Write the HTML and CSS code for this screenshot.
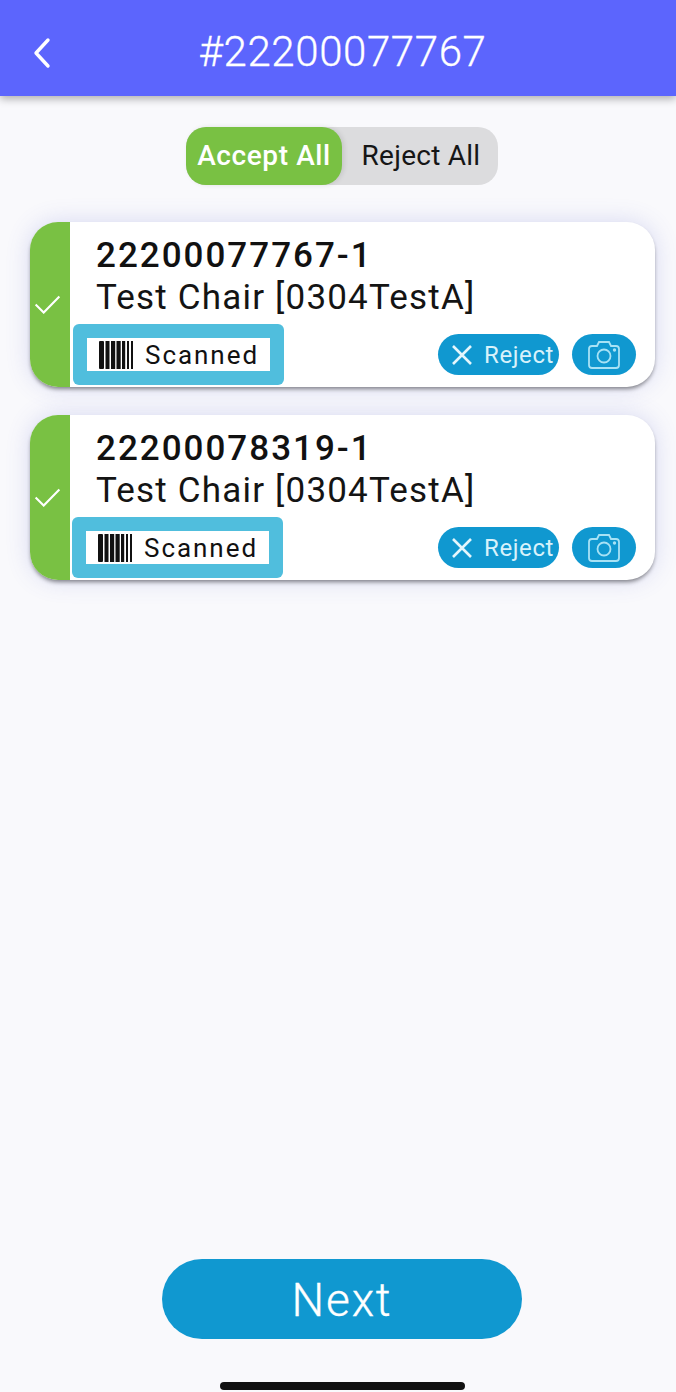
FILE: index.html
```html
<!DOCTYPE html>
<html lang="en">
<head>
<meta charset="utf-8">
<title>#22200077767</title>
<link rel="stylesheet" href="styles.css">
</head>
<body>
<div class="page">
  <header class="topbar">
    <svg class="back" viewBox="0 0 20 32" width="20" height="32"><path d="M16 3 L4 16 L16 29"/></svg>
    <h1 class="title">#22200077767</h1>
  </header>
  <div class="segment">
    <div class="seg-on">Accept All</div>
    <div class="seg-off">Reject All</div>
  </div>
  <main class="list">
    <section class="card">
      <div class="strip"><svg class="check" viewBox="0 0 28 20" width="27" height="19"><path d="M1.5 10 L10 18.5 L26.5 1.5"/></svg></div>
      <div class="body">
        <div class="code">22200077767-1</div>
        <div class="name">Test Chair [0304TestA]</div>
        <div class="row">
          <div class="badge"><div class="badge-in">
            <svg class="bars" viewBox="0 0 34 28" width="34" height="28"><path d="M0 1q0-1 1-1h3q1 0 1 1v26q0 1-1 1H1q-1 0-1-1zM6.500 0H10.500v28H6.500zM12 0h4.200v28H12zM17.500 0h4.200v28h-4.200zM23 0h3.200v28H23zM28 0h2v28h-2zM32 0h2.200v28H32z"/></svg>
            <span>Scanned</span>
          </div></div>
          <div class="actions">
            <button class="pill reject"><svg class="x" viewBox="0 0 22 22" width="22" height="22"><path d="M2 2 L20 20 M20 2 L2 20"/></svg>Reject</button>
            <button class="pill cam"><svg class="camera" viewBox="0 0 32 28" width="32" height="28"><path d="M4 5h5l2-4h10l2 4h5q3 0 3 3v16q0 3-3 3H4q-3 0-3-3V8q0-3 3-3z"/><circle cx="16" cy="15" r="6.500"/><circle cx="26.500" cy="9" r=".8"/></svg></button>
          </div>
        </div>
      </div>
    </section>
    <section class="card">
      <div class="strip"><svg class="check" viewBox="0 0 28 20" width="27" height="19"><path d="M1.5 10 L10 18.5 L26.5 1.5"/></svg></div>
      <div class="body">
        <div class="code">22200078319-1</div>
        <div class="name">Test Chair [0304TestA]</div>
        <div class="row">
          <div class="badge shift"><div class="badge-in">
            <svg class="bars" viewBox="0 0 34 28" width="34" height="28"><path d="M0 1q0-1 1-1h3q1 0 1 1v26q0 1-1 1H1q-1 0-1-1zM6.500 0H10.500v28H6.500zM12 0h4.200v28H12zM17.500 0h4.200v28h-4.200zM23 0h3.200v28H23zM28 0h2v28h-2zM32 0h2.200v28H32z"/></svg>
            <span>Scanned</span>
          </div></div>
          <div class="actions">
            <button class="pill reject"><svg class="x" viewBox="0 0 22 22" width="22" height="22"><path d="M2 2 L20 20 M20 2 L2 20"/></svg>Reject</button>
            <button class="pill cam"><svg class="camera" viewBox="0 0 32 28" width="32" height="28"><path d="M4 5h5l2-4h10l2 4h5q3 0 3 3v16q0 3-3 3H4q-3 0-3-3V8q0-3 3-3z"/><circle cx="16" cy="15" r="6.500"/><circle cx="26.500" cy="9" r=".8"/></svg></button>
          </div>
        </div>
      </div>
    </section>
  </main>
  <footer class="foot">
    <button class="next">Next</button>
    <div class="home"></div>
  </footer>
</div>
</body>
</html>
```
FILE: styles.css
```css
* { box-sizing: border-box; }
html, body { margin: 0; padding: 0; }
body { font-family: Roboto, "Liberation Sans", sans-serif; background: #f9f9fc; color: #111; }
.page { width: 676px; height: 1392px; display: flex; flex-direction: column; overflow: hidden; }
.topbar { height: 96px; flex: none; background: #5c65fd; box-shadow: 0 3px 8px rgba(0,0,0,.3); position: relative; display: flex; align-items: center; justify-content: center; padding-left: 9px; }
.back { position: absolute; left: 32px; top: 37px; fill: none; stroke: #fff; stroke-width: 3.4; stroke-linecap: round; stroke-linejoin: round; }
.title { margin: 0; font-size: 42px; font-weight: 300; color: #fff; line-height: 1; padding-top: 8px; letter-spacing: .6px; -webkit-text-stroke: .3px #fff; }
.segment { margin: 31px 0 0 186px; width: 312px; height: 58px; flex: none; border-radius: 20px; background: #dcdcde; display: flex; }
.seg-on { width: 156px; background: #79c143; color: #fff; border-radius: 20px; font-size: 28px; font-weight: 500; display: flex; align-items: center; justify-content: center; letter-spacing: .6px; padding-bottom: 2px; box-shadow: 2px 0 5px rgba(0,0,0,.1); }
.seg-off { flex: 1; font-size: 28px; display: flex; align-items: center; justify-content: center; letter-spacing: .25px; color: #161616; padding: 0 0 2px 2px; }
.list { margin: 37px 21px 0 30px; display: flex; flex-direction: column; gap: 28px; }
.card { height: 165px; border-radius: 28px; background: #fff; display: flex; box-shadow: 0 3px 4px -1px rgba(0,0,0,.45), 0 0 24px rgba(80,90,200,.2); }
.strip { width: 40px; flex: none; background: #79c143; border-radius: 28px 0 0 28px; display: flex; align-items: center; justify-content: center; }
.check { fill: none; stroke: #fff; stroke-width: 2.2; margin-right: 5px; }
.body { flex: 1; padding: 13px 19px 0 26px; display: flex; flex-direction: column; }
.code { font-size: 35px; font-weight: 500; line-height: 42px; letter-spacing: 2px; color: #111; }
.name { font-size: 35px; font-weight: 400; line-height: 42px; letter-spacing: 1.18px; color: #141414; }
.row { display: flex; justify-content: space-between; align-items: flex-start; margin-left: -23px; margin-top: 5px; }
.badge { width: 211px; height: 61px; background: #50bedd; border-radius: 6px; padding: 14px; }
.badge.shift { margin-left: -1px; }
.badge-in { background: #fff; height: 33px; display: flex; align-items: center; padding-left: 12px; gap: 12px; font-size: 26px; letter-spacing: 1.95px; color: #111; }
.bars { fill: #111; flex: none; }
.actions { display: flex; gap: 13px; margin-top: 10px; }
.pill { border: 0; height: 41px; padding: 0; background: #1098d0; color: #d8f2fb; border-radius: 21px; display: flex; align-items: center; font-family: inherit; }
.reject { width: 121px; font-size: 24px; letter-spacing: .6px; gap: 11px; padding-left: 13px; }
.cam { width: 64px; justify-content: center; }
.x { fill: none; stroke: #e4f6fc; stroke-width: 2.6; flex: none; }
.camera { fill: none; stroke: #a8e2f5; stroke-width: 1.8; }
.foot { margin-top: auto; display: flex; flex-direction: column; align-items: center; padding-left: 8px; }
.next { width: 360px; height: 80px; border: 0; border-radius: 40px; background: #1098d0; color: #fff; font-family: inherit; font-size: 46px; font-weight: 300; letter-spacing: 1.8px; padding-top: 2px; -webkit-text-stroke: .3px #fff; }
.home { width: 245px; height: 8px; background: #111; border-radius: 4px; margin: 43px 0 2px; }
```
